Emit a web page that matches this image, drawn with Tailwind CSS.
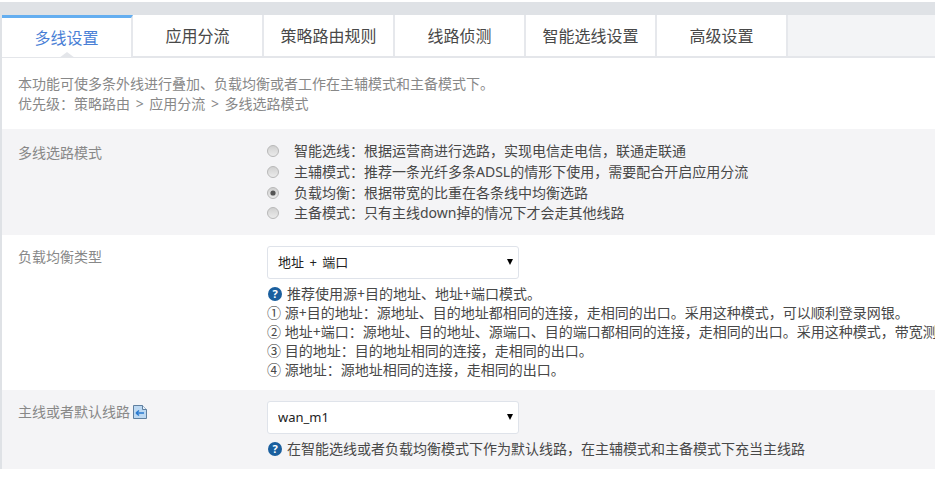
<!DOCTYPE html>
<html lang="zh-CN">
<head>
<meta charset="utf-8">
<title>多线设置</title>
<script src="https://cdn.jsdelivr.net/npm/@tailwindcss/browser@4"></script>
</head>
<body class="bg-white font-['Noto_Sans','Noto_Sans_CJK_SC',sans-serif] text-[14px] text-[#484848] overflow-hidden">
<div class="h-[485px] w-[935px] overflow-hidden pt-[2px]">
  <div class="h-[13px] bg-[#dfe2e6]"></div>
  <div class="border-l-2 border-[#dfe2e6]">
    <!-- tabs -->
    <div class="flex h-[43px] bg-[#f3f4f6] border-b-2 border-[#e4e6ea] text-[16px] leading-[42px] text-center">
      <div class="relative w-[131px] bg-white border-r-2 border-[#e6e8ec] border-t-[3px] border-t-[#64aef0] leading-[40px] h-[42px] text-[#4a7fd6]">多线设置
        <span class="absolute left-[57px] top-[34px] w-0 h-0 border-x-[8px] border-x-transparent border-b-[6px] border-b-[#e4e6ea]"></span>
      </div>
      <div class="w-[131px] bg-white border-r-2 border-[#e6e8ec]">应用分流</div>
      <div class="w-[131px] bg-white border-r-2 border-[#e6e8ec]">策略路由规则</div>
      <div class="w-[131px] bg-white border-r-2 border-[#e6e8ec]">线路侦测</div>
      <div class="w-[131px] bg-white border-r-2 border-[#e6e8ec]">智能选线设置</div>
      <div class="w-[131px] bg-white border-r-2 border-[#e6e8ec]">高级设置</div>
    </div>
    <!-- intro -->
    <div class="h-[71px] pl-[16px] pt-[16px] leading-[20px] text-[#888]">
      <p class="h-[19px]">本功能可使多条外线进行叠加、负载均衡或者工作在主辅模式和主备模式下。</p>
      <p class="h-[20px] [word-spacing:2px]">优先级<span class="font-['Noto_Sans_CJK_TC']">&#xFF1A;</span>策略路由 &gt; 应用分流 &gt; 多线选路模式</p>
    </div>
    <!-- mode -->
    <div class="flex h-[106px] bg-[#f4f4f6]">
      <div class="w-[265px] pl-[16px] pt-[14px] leading-[20px] text-[#888]">多线选路模式</div>
      <div class="pt-[11px] flex flex-col leading-[20px]">
        <label class="flex items-center gap-[15px] h-[20.7px]"><svg class="w-[12px] h-[12px] translate-y-[1px]" viewBox="0 0 12 12"><defs><linearGradient id="rg" x1="0" y1="0" x2="0" y2="1"><stop offset="0" stop-color="#cfcfcf"/><stop offset="1" stop-color="#ececec"/></linearGradient></defs><circle cx="6" cy="6" r="5.5" fill="url(#rg)" stroke="#b8b8b8"/></svg><span class="h-[20px]">智能选线<span class="font-['Noto_Sans_CJK_TC']">&#xFF1A;</span>根据运营商进行选路&#xFF0C;实现电信走电信&#xFF0C;联通走联通</span></label>
        <label class="flex items-center gap-[15px] h-[20.7px]"><svg class="w-[12px] h-[12px] translate-y-[1px]" viewBox="0 0 12 12"><circle cx="6" cy="6" r="5.5" fill="url(#rg)" stroke="#b8b8b8"/></svg><span class="h-[20px]">主辅模式<span class="font-['Noto_Sans_CJK_TC']">&#xFF1A;</span>推荐一条光纤多条ADSL的情形下使用&#xFF0C;需要配合开启应用分流</span></label>
        <label class="flex items-center gap-[15px] h-[20.7px]"><svg class="w-[12px] h-[12px] translate-y-[1px]" viewBox="0 0 12 12"><circle cx="6" cy="6" r="5.5" fill="url(#rg)" stroke="#b8b8b8"/><circle cx="6" cy="6" r="2.6" fill="#555"/></svg><span class="h-[20px]">负载均衡<span class="font-['Noto_Sans_CJK_TC']">&#xFF1A;</span>根据带宽的比重在各条线中均衡选路</span></label>
        <label class="flex items-center gap-[15px] h-[20.7px]"><svg class="w-[12px] h-[12px] translate-y-[1px]" viewBox="0 0 12 12"><circle cx="6" cy="6" r="5.5" fill="url(#rg)" stroke="#b8b8b8"/></svg><span class="h-[20px]">主备模式<span class="font-['Noto_Sans_CJK_TC']">&#xFF1A;</span>只有主线down掉的情况下才会走其他线路</span></label>
      </div>
    </div>
    <!-- type -->
    <div class="flex h-[155px]">
      <div class="w-[265px] pl-[16px] pt-[12px] leading-[20px] text-[#888]">负载均衡类型</div>
      <div class="pt-[11px] min-w-0 flex-1">
        <div class="relative w-[252px] h-[33px]">
          <select class="appearance-none w-full h-full bg-white border border-[#dfe3ea] rounded-[3px] pl-[10px] text-[13px] text-[#222] [word-spacing:2px]"><option>地址 + 端口</option></select>
          <span class="absolute right-[6px] top-[13px] w-0 h-0 border-x-[3px] border-x-transparent border-t-[6px] border-t-black"></span>
        </div>
        <div class="mt-[5px] leading-[19px] whitespace-nowrap">
          <p class="flex items-center gap-[5px] h-[19px]"><span class="ml-[1px] w-[14px] h-[14px] rounded-full bg-[#1a5f9e] text-white text-[11px] font-bold leading-[14px] text-center">?</span>推荐使用源+目的地址、地址+端口模式。</p>
          <p class="h-[19px]">① 源+目的地址<span class="font-['Noto_Sans_CJK_TC']">&#xFF1A;</span>源地址、目的地址都相同的连接&#xFF0C;走相同的出口。采用这种模式&#xFF0C;可以顺利登录网银。</p>
          <p class="h-[19px]">② 地址+端口<span class="font-['Noto_Sans_CJK_TC']">&#xFF1A;</span>源地址、目的地址、源端口、目的端口都相同的连接&#xFF0C;走相同的出口。采用这种模式&#xFF0C;带宽测</p>
          <p class="h-[19px]">③ 目的地址<span class="font-['Noto_Sans_CJK_TC']">&#xFF1A;</span>目的地址相同的连接&#xFF0C;走相同的出口。</p>
          <p class="h-[19px]">④ 源地址<span class="font-['Noto_Sans_CJK_TC']">&#xFF1A;</span>源地址相同的连接&#xFF0C;走相同的出口。</p>
        </div>
      </div>
    </div>
    <!-- default -->
    <div class="flex h-[79px] bg-[#f4f4f6]">
      <div class="w-[265px] pl-[16px] pt-[12px] leading-[20px] text-[#888] flex items-start gap-[3px]">主线或者默认线路
        <svg class="w-[14px] h-[14px] mt-[3px]" viewBox="0 0 14 14"><path d="M.5.5h9l4 4v9H.5z" fill="#bcd8f2" stroke="#5f7f9f"/><path d="M9.5.5v4h4" fill="#e8f2fb" stroke="#5f7f9f"/><path d="M3 8h8M3 8l3-2.5M3 8l3 2.5" stroke="#2a7ad0" stroke-width="1.6" fill="none"/></svg>
      </div>
      <div class="pt-[11px] flex-1">
        <div class="relative w-[252px] h-[33px]">
          <select class="appearance-none w-full h-full bg-white border border-[#dfe3ea] rounded-[3px] pl-[10px] text-[13px] text-[#222]"><option>wan_m1</option></select>
          <span class="absolute right-[6px] top-[13px] w-0 h-0 border-x-[3px] border-x-transparent border-t-[6px] border-t-black"></span>
        </div>
        <p class="mt-[5px] leading-[20px] flex items-center gap-[5px] whitespace-nowrap"><span class="ml-[1px] w-[14px] h-[14px] rounded-full bg-[#1a5f9e] text-white text-[11px] font-bold leading-[14px] text-center">?</span>在智能选线或者负载均衡模式下作为默认线路&#xFF0C;在主辅模式和主备模式下充当主线路</p>
      </div>
    </div>
  </div>
</div>
</body>
</html>
